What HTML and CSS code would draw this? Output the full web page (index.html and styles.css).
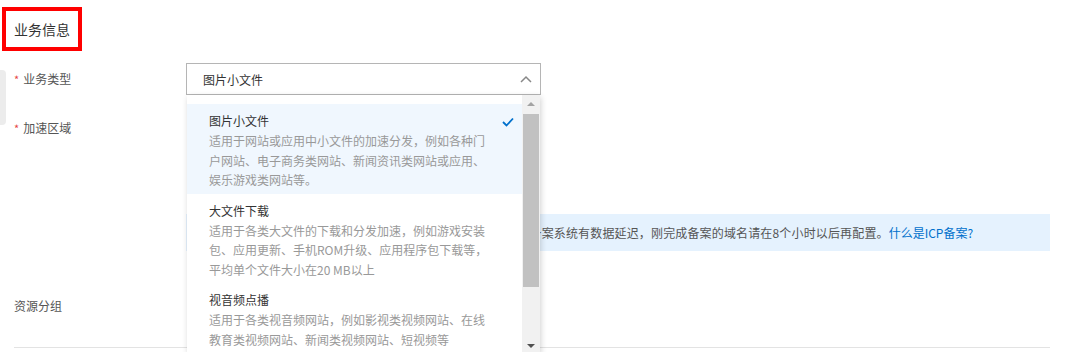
FILE: index.html
```html
<!DOCTYPE html>
<html>
<head>
    <title>业务信息</title>
    <link rel="stylesheet" href="styles.css">
</head>
<body>
    <div class="side-handle"></div>

    <div class="page">
        <h2 class="section-title">业务信息</h2>

        <div class="form-row">
            <label class="form-label"><span class="req">*</span>业务类型</label>
            <div class="form-control">
                <div class="select">
                    <span class="select-value">图片小文件</span>
                    <svg class="select-arrow" width="12" height="8" viewBox="0 0 12 8">
                        <polyline points="1,7 6,2 11,7" fill="none" stroke="#888" stroke-width="1.5"/>
                    </svg>

                    <div class="dropdown">
                        <ul class="options">
                            <li class="option selected">
                                <div class="option-title">图片小文件</div>
                                <div class="option-desc">适用于网站或应用中小文件的加速分发，例如各种门户网站、电子商务类网站、新闻资讯类网站或应用、娱乐游戏类网站等。</div>
                                <svg class="check" width="12" height="10" viewBox="0 0 12 10">
                                    <polyline points="1,5 4.5,8.5 11,1.5" fill="none" stroke="#0070cc" stroke-width="1.8"/>
                                </svg>
                            </li>
                            <li class="option">
                                <div class="option-title">大文件下载</div>
                                <div class="option-desc">适用于各类大文件的下载和分发加速，例如游戏安装包、应用更新、手机ROM升级、应用程序包下载等，平均单个文件大小在20 MB以上</div>
                            </li>
                            <li class="option">
                                <div class="option-title">视音频点播</div>
                                <div class="option-desc">适用于各类视音频网站，例如影视类视频网站、在线教育类视频网站、新闻类视频网站、短视频等</div>
                            </li>
                        </ul>
                        <div class="scrollbar">
                            <div class="scroll-btn"><span class="tri-up"></span></div>
                            <div class="scroll-track"><div class="scroll-thumb"></div></div>
                            <div class="scroll-btn down"><span class="tri-down"></span></div>
                        </div>
                    </div>
                </div>
            </div>
        </div>

        <div class="form-row region-row">
            <label class="form-label"><span class="req">*</span>加速区域</label>
            <div class="form-control">
                <div class="notice"><span class="notice-text">由于ICP备案系统有数据延迟，刚完成备案的域名请在8个小时以后再配置。</span><a href="#" class="notice-link">什么是ICP备案?</a></div>
            </div>
        </div>

        <div class="form-row group-row">
            <label class="form-label">资源分组</label>
            <div class="form-control"></div>
        </div>

        <div class="divider"></div>
    </div>
</body>
</html>
```

FILE: styles.css
```css
body {
    margin: 0;
    font-family: "Noto Sans CJK SC", "Noto Sans", sans-serif;
    font-size: 12px;
    color: #333;
    background: #fff;
}
.side-handle {
    position: absolute;
    left: 0;
    top: 70px;
    width: 6px;
    height: 55px;
    background: #ececec;
    border-radius: 0 4px 4px 0;
}
.page {
    width: 1036px;
    min-height: 345px;
    padding: 7px 0 0 14px;
}
.section-title {
    display: inline-block;
    margin: 0 0 0 -12px;
    padding: 0 8px;
    border: 4px solid #f00;
    font-size: 14px;
    font-weight: normal;
    line-height: 36px;
    color: #333;
}
.form-row {
    display: flex;
    align-items: flex-start;
    margin-top: 12px;
}
.form-label {
    width: 172px;
    flex-shrink: 0;
    line-height: 32px;
    color: #555;
}
.req {
    color: #e64545;
    margin-right: 4px;
    font-size: 11px;
}
.form-control {
    flex: 1;
}
.select {
    position: relative;
    width: 337px;
    height: 30px;
    border: 1px solid #b5b5b5;
    display: flex;
    align-items: center;
    justify-content: space-between;
    padding: 0 0 0 16px;
}
.select-value {
    color: #333;
}
.select-arrow {
    margin-right: 8px;
}
.dropdown {
    position: absolute;
    top: 31px;
    left: 0;
    width: 353px;
    height: 258px;
    background: #fff;
    box-shadow: 1px 2px 6px rgba(0, 0, 0, 0.18);
    display: flex;
    z-index: 10;
    overflow: hidden;
}
.options {
    list-style: none;
    margin: 0;
    padding: 9px 0 0;
    flex: 1;
}
.option {
    position: relative;
    padding: 7px 8px 4px 22px;
}
.option.selected {
    background: #f0f7fe;
}
.option-title {
    line-height: 20px;
    color: #333;
}
.option-desc {
    width: 284px;
    line-height: 19.5px;
    color: #999;
}
.check {
    position: absolute;
    right: 8px;
    top: 13px;
}
.scrollbar {
    width: 18px;
    background: #f1f1f1;
    display: flex;
    flex-direction: column;
}
.scroll-btn {
    height: 18px;
    display: flex;
    align-items: center;
    justify-content: center;
}
.scroll-btn.down {
    margin-top: auto;
    height: 14px;
}
.tri-up {
    border-left: 4px solid transparent;
    border-right: 4px solid transparent;
    border-bottom: 4px solid #a3a3a3;
}
.tri-down {
    border-left: 4px solid transparent;
    border-right: 4px solid transparent;
    border-top: 4px solid #505050;
}
.scroll-thumb {
    margin: 1px 1px 0;
    height: 173px;
    background: #c1c1c1;
}
.region-row {
    margin-top: 17px;
}
.notice {
    margin-top: 102px;
    height: 37px;
    line-height: 37px;
    background: #e5f2fe;
    padding-left: 300px;
    color: #555;
    letter-spacing: 0.15px;
    white-space: nowrap;
}
.notice-link {
    color: #0070cc;
    text-decoration: none;
    letter-spacing: 0;
}
.group-row {
    margin-top: 39px;
}
.divider {
    margin-top: 25px;
    height: 1px;
    background: #e3e3e3;
}
```
